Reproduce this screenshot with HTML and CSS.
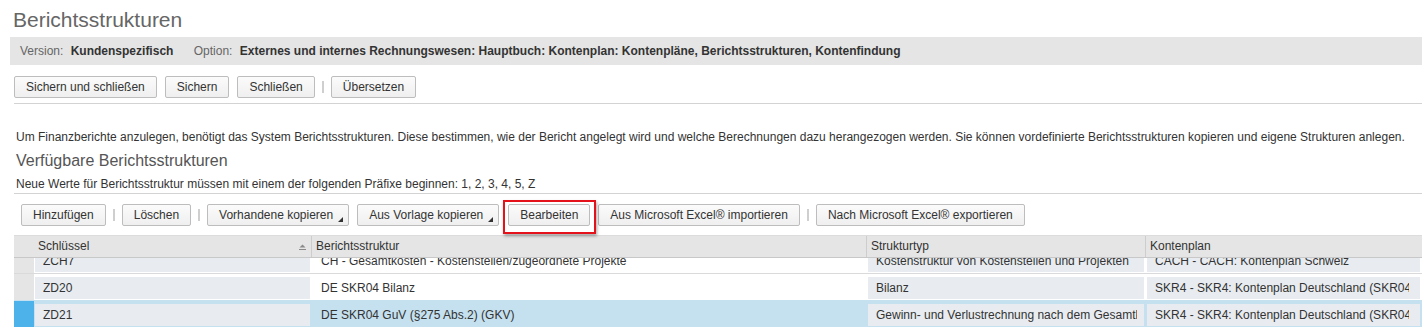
FILE: index.html
```html
<!DOCTYPE html>
<html lang="de">

<head>
    <meta charset="UTF-8">
    <meta name="viewport" content="width=device-width, initial-scale=1.0">
    <title>Berichtsstrukturen</title>
    <link rel="stylesheet" href="styles.css">
</head>

<body>

    <h1 class="page-title">Berichtsstrukturen</h1>

    <div class="infobar">
        <span class="info-label">Version:</span>
        <span class="info-value">Kundenspezifisch</span>
        <span class="info-label">Option:</span>
        <span class="info-value">Externes und internes Rechnungswesen: Hauptbuch: Kontenplan: Kontenpläne, Berichtsstrukturen, Kontenfindung</span>
    </div>

    <div class="toolbar main-toolbar">
        <button class="btn">Sichern und schließen</button>
        <button class="btn">Sichern</button>
        <button class="btn">Schließen</button>
        <span class="sep"></span>
        <button class="btn">Übersetzen</button>
    </div>

    <p class="desc">Um Finanzberichte anzulegen, benötigt das System Berichtsstrukturen. Diese bestimmen, wie der Bericht angelegt wird und welche Berechnungen dazu herangezogen werden. Sie können vordefinierte Berichtsstrukturen kopieren und eigene Strukturen anlegen.</p>

    <h2 class="section-title">Verfügbare Berichtsstrukturen</h2>
    <p class="hint">Neue Werte für Berichtsstruktur müssen mit einem der folgenden Präfixe beginnen: 1, 2, 3, 4, 5, Z</p>

    <div class="toolbar list-toolbar">
        <button class="btn">Hinzufügen</button>
        <span class="sep"></span>
        <button class="btn">Löschen</button>
        <span class="sep"></span>
        <button class="btn btn-menu">Vorhandene kopieren<span class="menu-arrow"></span></button>
        <button class="btn btn-menu">Aus Vorlage kopieren<span class="menu-arrow"></span></button>
        <button class="btn highlighted">Bearbeiten</button>
        <button class="btn">Aus Microsoft Excel® importieren</button>
        <span class="sep"></span>
        <button class="btn">Nach Microsoft Excel® exportieren</button>
    </div>

    <div class="grid">
        <div class="grid-row grid-head">
            <div class="selector"></div>
            <div class="head-cell">Schlüssel
                <svg class="sort-icon" width="7" height="6" viewBox="0 0 7 6">
                    <path d="M3.5 0.5 L6.5 3.5 L0.5 3.5 Z" fill="#8a8a8a" />
                    <rect x="0" y="5" width="7" height="1" fill="#8a8a8a" />
                </svg>
            </div>
            <div class="head-cell">Berichtsstruktur</div>
            <div class="head-cell">Strukturtyp</div>
            <div class="head-cell">Kontenplan</div>
        </div>

        <div class="grid-body">
            <div class="grid-row data-row first-row">
                <div class="selector"></div>
                <div class="cell readonly"><span>ZCH7</span></div>
                <div class="cell"><span>CH - Gesamtkosten - Kostenstellen/zugeordnete Projekte</span></div>
                <div class="cell readonly"><span>Kostenstruktur von Kostenstellen und Projekten</span></div>
                <div class="cell readonly"><span>CACH - CACH: Kontenplan Schweiz</span></div>
            </div>
            <div class="grid-row data-row">
                <div class="selector"></div>
                <div class="cell readonly"><span>ZD20</span></div>
                <div class="cell"><span>DE SKR04 Bilanz</span></div>
                <div class="cell readonly"><span>Bilanz</span></div>
                <div class="cell readonly"><span>SKR4 - SKR4: Kontenplan Deutschland (SKR04)</span></div>
            </div>
            <div class="grid-row data-row selected">
                <div class="selector"></div>
                <div class="cell readonly"><span>ZD21</span></div>
                <div class="cell"><span>DE SKR04 GuV (§275 Abs.2) (GKV)</span></div>
                <div class="cell readonly"><span>Gewinn- und Verlustrechnung nach dem Gesamtkostenverfahren</span></div>
                <div class="cell readonly"><span>SKR4 - SKR4: Kontenplan Deutschland (SKR04)</span></div>
            </div>
        </div>
    </div>

</body>

</html>
```

FILE: styles.css
```css
html,
body {
    height: 328px;
    overflow: hidden;
}

body {
    margin: 0;
    font-family: "Liberation Sans", Arial, sans-serif;
    font-size: 12px;
    color: #333;
    background-color: #fff;
}

.page-title {
    margin: 0;
    padding: 8px 0 0 13px;
    font-size: 21px;
    line-height: 24px;
    font-weight: normal;
    color: #666;
}

.infobar {
    margin: 5px 0 0 10px;
    padding-left: 10px;
    height: 28px;
    line-height: 28px;
    background-color: #e5e5e5;
    white-space: nowrap;
}

.info-label {
    color: #666;
    margin-right: 4px;
}

.info-value {
    font-weight: bold;
    color: #333;
    margin-right: 17px;
}

.toolbar {
    display: flex;
    align-items: center;
    gap: 8px;
}

.main-toolbar {
    margin: 11px 0 0 14px;
    padding-bottom: 5px;
    border-bottom: 1px solid #d3d3d3;
}

.list-toolbar {
    margin: 10px 0 0 21px;
}

.btn {
    height: 22px;
    padding: 0 11px;
    font-family: inherit;
    font-size: 12px;
    color: #333;
    background: linear-gradient(#fbfbfb, #efefef);
    border: 1px solid #bdbdbd;
    border-radius: 2px;
    white-space: nowrap;
    cursor: pointer;
}

.btn-menu {
    padding-right: 5px;
}

.menu-arrow {
    display: inline-block;
    width: 0;
    height: 0;
    margin-left: 5px;
    border-left: 5px solid transparent;
    border-bottom: 5px solid #333;
    vertical-align: -3px;
}

.sep {
    width: 2px;
    height: 12px;
    margin: 0 -1px;
    background-color: #cfcfcf;
}

.highlighted {
    position: relative;
    margin-left: 1px;
}

/* red annotation box around the button */
.highlighted::after {
    content: "";
    position: absolute;
    top: -5px;
    left: -6px;
    right: -7px;
    bottom: -9px;
    border: 2px solid #e3121b;
    box-shadow: 1px 2px 3px rgba(0, 0, 0, 0.35);
    pointer-events: none;
}

.desc {
    margin: 25px 0 0 16px;
    line-height: 16px;
    white-space: nowrap;
}

.section-title {
    margin: 6px 0 0 16px;
    font-size: 16px;
    line-height: 20px;
    font-weight: normal;
    color: #555;
}

.hint {
    margin: 5px 0 0 14px;
    padding: 0 0 1px 2px;
    line-height: 16px;
    border-bottom: 1px solid #d3d3d3;
}

.grid {
    margin: 9px 0 0 14px;
}

.grid-row {
    display: grid;
    grid-template-columns: 20px 278px 555px 279px minmax(0, 1fr);
}

.grid-head {
    height: 21px;
    background-color: #e5e5e5;
    border-top: 1px solid #dcdcdc;
    border-bottom: 1px solid #c8c8c8;
}

.head-cell {
    display: flex;
    align-items: center;
    justify-content: space-between;
    padding: 0 4px;
    line-height: 21px;
    border-right: 1px solid #cdcdcd;
    white-space: nowrap;
}

.grid-head .head-cell:last-child {
    border-right: none;
}

.sort-icon {
    margin-right: 1px;
}

.grid-body {
    height: 80px;
    overflow: hidden;
}

.data-row {
    border-top: 1px solid #dadada;
    background-color: #fff;
}

.first-row {
    margin-top: -12px;
}

.selector {
    background-color: #e5e5e5;
}

.cell {
    min-width: 0;
    height: 22px;
    margin: 3px 2px 1px 1px;
    padding: 0 7px 0 8px;
    line-height: 22px;
    white-space: nowrap;
}

.cell:last-child {
    padding-right: 11px;
}

.cell span {
    display: block;
    overflow: hidden;
}

.readonly {
    background-color: #e8ecf0;
}

.selected {
    background-color: #c5e0ef;
    border-top-color: #c5e0ef;
}

.selected .selector {
    background-color: #4db1ea;
}
```
